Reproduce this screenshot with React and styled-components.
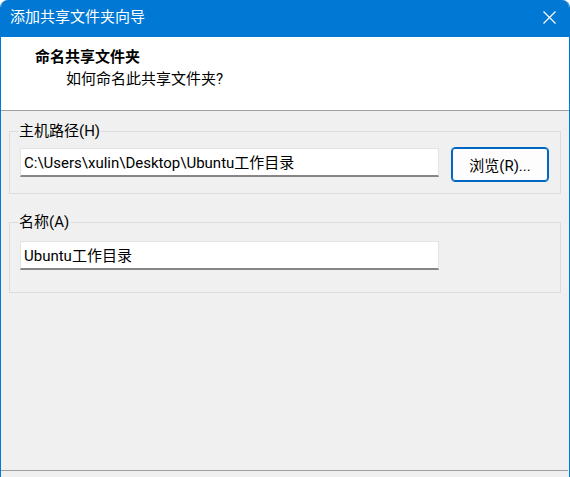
import styled, { createGlobalStyle } from "styled-components";

const GlobalStyle = createGlobalStyle`
  html, body {
    margin: 0;
    padding: 0;
    background: #ffffff;
  }
  * {
    box-sizing: border-box;
  }
`;

export default function App() {
  return (
    <>
      <GlobalStyle />
      <Window>
        <TitleBar>
          <span>添加共享文件夹向导</span>
          <CloseButton aria-label="关闭">
            <svg width="13" height="13" viewBox="0 0 13 13">
              <path d="M0.5 0.5 L12.5 12.5 M12.5 0.5 L0.5 12.5" stroke="#ffffff" strokeWidth="1.2" />
            </svg>
          </CloseButton>
        </TitleBar>

        <Header>
          <HeaderTitle>命名共享文件夹</HeaderTitle>
          <HeaderHint>如何命名此共享文件夹?</HeaderHint>
        </Header>

        <Body>
          <GroupBox $height={63} $top={20} $pad={16}>
            <GroupLabel>主机路径(H)</GroupLabel>
            <FieldRow>
              <TextBox defaultValue="C:\Users\xulin\Desktop\Ubuntu工作目录" />
              <Button>浏览(R)...</Button>
            </FieldRow>
          </GroupBox>

          <GroupBox $height={71} $top={28} $pad={18}>
            <GroupLabel>名称(A)</GroupLabel>
            <FieldRow>
              <TextBox defaultValue="Ubuntu工作目录" />
            </FieldRow>
          </GroupBox>
        </Body>

        <Footer />
      </Window>
    </>
  );
}

const Window = styled.div`
  width: 570px;
  height: 477px;
  display: flex;
  flex-direction: column;
  overflow: hidden;
  border-radius: 8px 8px 0 0;
  background: #f0f0f0;
  border-left: 1px solid #0078d4;
  border-right: 1px solid #0078d4;
  font-family: Roboto, "Noto Sans CJK SC", sans-serif;
  font-size: 15px;
  color: #000000;
`;

const TitleBar = styled.div`
  height: 37px;
  flex-shrink: 0;
  margin: 0 -1px;
  padding: 0 9px 3px 10px;
  display: flex;
  align-items: center;
  justify-content: space-between;
  background: #0078d4;
  color: #ffffff;
  font-size: 15px;
  line-height: 20px;
`;

const CloseButton = styled.div`
  width: 30px;
  height: 20px;
  display: flex;
  align-items: center;
  justify-content: center;
  margin-right: -3px;
`;

const Header = styled.div`
  height: 74px;
  flex-shrink: 0;
  padding: 9px 0 0 34px;
  background: #ffffff;
  border-bottom: 1px solid #a0a0a0;
  line-height: 22px;
`;

const HeaderTitle = styled.div`
  font-weight: 700;
`;

const HeaderHint = styled.div`
  padding-left: 31px;
`;

const Body = styled.div`
  flex: 1;
  display: flex;
  flex-direction: column;
  padding: 0 8px;
`;

const GroupBox = styled.div`
  position: relative;
  height: ${(p) => p.$height}px;
  margin-top: ${(p) => p.$top}px;
  padding: ${(p) => p.$pad}px 10px 0 10px;
  border: 1px solid #dcdcdc;
`;

const GroupLabel = styled.span`
  position: absolute;
  top: -12px;
  left: 8px;
  padding: 0 1px;
  background: #f0f0f0;
  line-height: 22px;
`;

const FieldRow = styled.div`
  display: flex;
  align-items: flex-start;
  gap: 12px;
`;

const TextBox = styled.input`
  width: 419px;
  height: 29px;
  padding: 0 3px 1px;
  border: 1px solid #e3e3e3;
  border-bottom: 2px solid #868686;
  background: #ffffff;
  font: inherit;
  color: #000000;
  outline: none;
`;

const Button = styled.button`
  width: 98px;
  height: 35px;
  margin-top: -1px;
  padding: 0;
  border: 1px solid #0067c0;
  border-radius: 4px;
  background: #fdfdfd;
  font: inherit;
  color: #000000;
  box-shadow: inset 0 0 0 1px #0067c0;
`;

const Footer = styled.div`
  height: 7px;
  flex-shrink: 0;
  margin: 0 1px 0 0;
  border-top: 1px solid #a0a0a0;
`;
